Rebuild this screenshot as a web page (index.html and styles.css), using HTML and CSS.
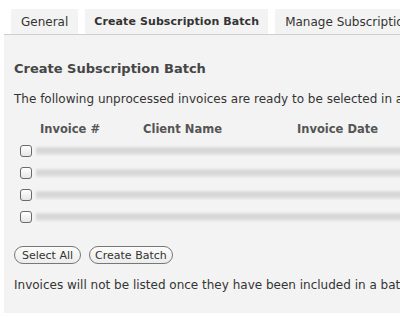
FILE: index.html
```html
<!DOCTYPE html>
<html lang="en">
<head>
  <meta charset="UTF-8">
  <title>Subscriptions</title>
  <link rel="stylesheet" href="styles.css">
</head>
<body>
  <div class="tabs">
    <a href="#" class="tab">General</a>
    <a href="#" class="tab active">Create Subscription Batch</a>
    <a href="#" class="tab">Manage Subscriptions</a>
  </div>

  <div class="panel">
    <h2>Create Subscription Batch</h2>
    <p class="intro">The following unprocessed invoices are ready to be selected in a batch.</p>

    <div class="table">
      <div class="thead">
        <span class="col-num">Invoice #</span>
        <span class="col-client">Client Name</span>
        <span class="col-date">Invoice Date</span>
      </div>
      <div class="rows">
        <div class="row"><input type="checkbox"><div class="blur"></div></div>
        <div class="row"><input type="checkbox"><div class="blur"></div></div>
        <div class="row"><input type="checkbox"><div class="blur"></div></div>
        <div class="row"><input type="checkbox"><div class="blur"></div></div>
      </div>
    </div>

    <div class="actions">
      <button class="pill">Select All</button>
      <button class="pill">Create Batch</button>
    </div>

    <p class="note">Invoices will not be listed once they have been included in a batch.</p>
  </div>
</body>
</html>
```

FILE: styles.css
```css
body {
  margin: 0;
  background-color: white;
  font-family: 'DejaVu Sans', Verdana, sans-serif;
  font-size: 12px;
  color: #333;
  overflow: hidden;
}

.tabs {
  display: flex;
  gap: 7px;
  padding: 9px 0 0 11px;
  white-space: nowrap;
}

.tab {
  display: block;
  height: 25px;
  line-height: 26px;
  padding: 0 10px;
  background-color: #f3f3f3;
  color: #333;
  text-decoration: none;
  font-size: 12px;
}

.tab.active {
  font-weight: bold;
  font-size: 11px;
  letter-spacing: 0.1px;
  padding: 0 9px;
}

.panel {
  margin-left: 4px;
  border-top: 1px solid #cfcfcf;
  background-color: #f3f3f3;
  height: 278px;
  padding: 0 10px;
  white-space: nowrap;
}

h2 {
  margin: 0;
  padding-top: 26px;
  font-size: 13px;
  color: #464646;
  line-height: 16px;
}

.intro {
  margin: 14px 0 0;
  line-height: 16px;
}

.thead {
  display: flex;
  margin-top: 14px;
  height: 16px;
  line-height: 16px;
  font-size: 11.5px;
  font-weight: bold;
  color: #555;
}

.col-num {
  margin-left: 26px;
  width: 103px;
}

.col-client {
  width: 154px;
}

.rows {
  margin-top: 3px;
}

.row {
  display: flex;
  align-items: center;
  height: 22px;
}

.row input {
  appearance: none;
  width: 12px;
  height: 12px;
  margin: 0 0 0 6px;
  border: 1px solid #6a6a6a;
  border-radius: 3px;
  background: linear-gradient(#fff, #e6e6e6);
}

.blur {
  flex: 1;
  height: 8px;
  margin-left: 4px;
  margin-right: -20px;
  background:
    linear-gradient(#e0e0e0, #cfcfcf 40%, #d8d8d8 60%, #e2e2e2),
    #d6d6d6;
  filter: blur(1px);
  opacity: 0.9;
}

.actions {
  display: flex;
  gap: 8px;
  margin-top: 18px;
}

.pill {
  font-family: 'DejaVu Sans', Verdana, sans-serif;
  font-size: 11px;
  color: #333;
  height: 18px;
  padding: 0 7px;
  border: 1px solid #777;
  border-radius: 9px;
  background: linear-gradient(#fdfdfd, #ececec);
}

.pill + .pill {
  padding: 0 5px;
}

.note {
  margin: 13px 0 0;
  line-height: 16px;
}
```
